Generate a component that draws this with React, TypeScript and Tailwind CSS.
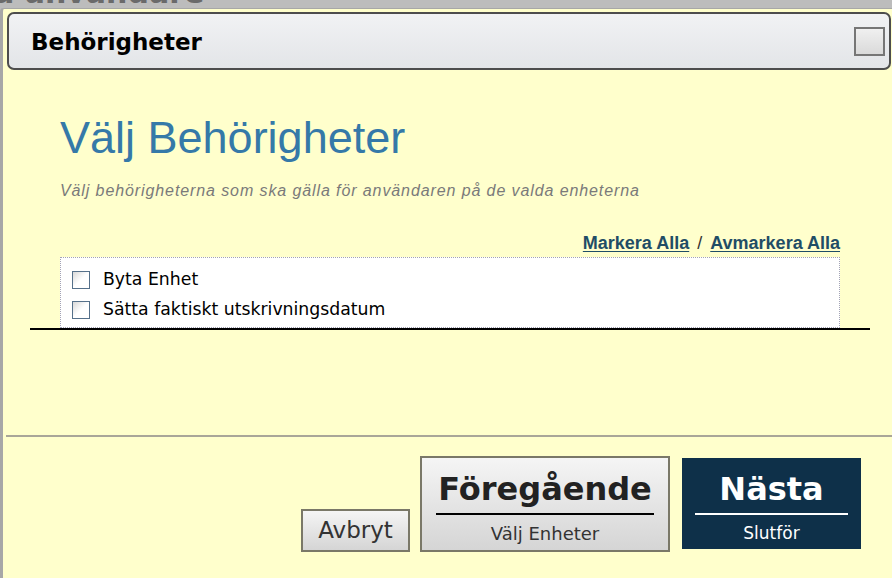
import React from "react";

const sans = "font-['DejaVu_Sans',sans-serif]";
const arial = "font-['Liberation_Sans',Arial,sans-serif]";

const permissions = ["Byta Enhet", "Sätta faktiskt utskrivningsdatum"];

const Checkbox = () => (
  <span className="block h-[18px] w-[18px] shrink-0 border border-[#55708a] bg-gradient-to-br from-[#d8d8d8] via-white to-white" />
);

export default function App() {
  return (
    <div className="flex h-[578px] w-[892px] flex-col overflow-hidden bg-[#bcbcbc]">
      {/* page behind the dialog */}
      <div className="h-[8px] overflow-hidden">
        <div
          className={`-mt-[22px] -ml-[6px] whitespace-nowrap text-[30px] font-bold leading-[30px] text-[#6a6a6a] ${sans}`}
        >
          a användare
        </div>
      </div>

      <div className="flex flex-1 flex-col rounded-tl-[4px] border-l-[3px] border-t border-[#a7a7a7] bg-[#ffffcc]">
        {/* title bar */}
        <div className="ml-[4px] mr-px mt-[3px] flex h-[58px] items-center justify-between rounded-[7px] border-2 border-[#4d4d4d] bg-gradient-to-b from-[#f1f2f4] to-[#e3e5e8] pl-[22px] pr-[4px]">
          <span className={`pt-[2px] text-[23px] font-bold leading-none text-black ${sans}`}>Behörigheter</span>
          <span className="h-[29px] w-[31px] border-2 border-[#767676] bg-gradient-to-b from-[#f0f0f0] to-[#dadada]" />
        </div>

        {/* content */}
        <div className="flex h-[365px] flex-col">
          <div className="flex flex-col pl-[57px] pr-[52px]">
            <h1 className={`mt-[45px] text-[45px] leading-none text-[#3579a8] ${arial}`}>Välj Behörigheter</h1>
            <p className={`mt-[23px] text-[16px] italic leading-none tracking-[0.9px] text-[#7a7a7a] ${arial}`}>
              Välj behörigheterna som ska gälla för användaren på de valda enheterna
            </p>
            <div className={`mt-[35px] flex justify-end gap-[8px] text-[18px] leading-none ${arial}`}>
              <a className="font-bold text-[#1f4d66] underline underline-offset-2">Markera Alla</a>
              <span className="text-[#333]">/</span>
              <a className="font-bold text-[#1f4d66] underline underline-offset-2">Avmarkera Alla</a>
            </div>
            <div className="mt-[5px] flex flex-col border border-dotted border-[#a3a3b5] bg-white pb-[2px] pl-[11px] pt-[7px]">
              {permissions.map((p) => (
                <label key={p} className="flex h-[30px] items-center gap-[13px]">
                  <Checkbox />
                  <span className={`text-[17.3px] leading-none text-black ${sans}`}>{p}</span>
                </label>
              ))}
            </div>
          </div>
          <div className="ml-[27px] mr-[22px] h-[2px] bg-black" />
        </div>

        <div className="ml-[3px] h-[2px] bg-[#a9a698]" />

        {/* buttons */}
        <div className="flex flex-1 items-end justify-end gap-[10px] pb-[26px] pr-[31px]">
          <button
            className={`flex h-[43px] w-[109px] items-center justify-center border-2 border-[#7a7868] bg-gradient-to-b from-[#f5f5f5] to-[#d5d5d5] text-[23px] leading-none text-[#333] ${sans}`}
          >
            Avbryt
          </button>
          <button
            className={`flex h-[96px] w-[250px] flex-col items-stretch border-2 border-[#7a7868] bg-gradient-to-b from-[#f5f5f5] to-[#d5d5d5] px-[14px] pt-[15px] text-[#222] ${sans}`}
          >
            <span className="text-[32px] font-bold leading-none">Föregående</span>
            <span className="mt-[8px] h-[2px] bg-black" />
            <span className="mt-[10px] text-[18px] leading-none text-[#333]">Välj Enheter</span>
          </button>
          <button
            className={`mb-[3px] ml-[2px] flex h-[91px] w-[179px] flex-col items-stretch bg-[#0e3049] px-[13px] pt-[15px] text-white ${sans}`}
          >
            <span className="text-[32px] font-bold leading-none">Nästa</span>
            <span className="mt-[8px] h-[2px] bg-white" />
            <span className="mt-[10px] text-[17px] leading-none">Slutför</span>
          </button>
        </div>
      </div>
    </div>
  );
}
